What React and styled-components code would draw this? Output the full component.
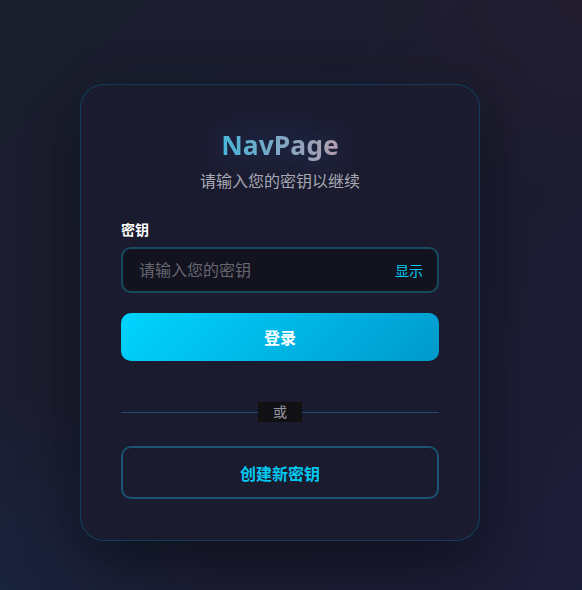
import React from "react";
import styled, { createGlobalStyle } from "styled-components";

const Global = createGlobalStyle`
  html, body { margin: 0; padding: 0; }
  body {
    font-family: "Noto Sans", "Noto Sans CJK SC", sans-serif;
    background: #1b1d30;
  }
`;

const Page = styled.div`
  width: 582px;
  height: 590px;
  box-sizing: border-box;
  padding: 84px 0 0 80px;
  overflow: hidden;
  background:
    radial-gradient(ellipse 60% 50% at 0% 100%, rgba(25, 38, 66, 0.75), transparent 70%),
    radial-gradient(ellipse 60% 50% at 100% 0%, rgba(36, 29, 48, 0.8), transparent 70%),
    linear-gradient(135deg, #1a1e2d 0%, #1c1c2f 50%, #1c1d38 100%);
`;

const Card = styled.div`
  width: 400px;
  box-sizing: border-box;
  padding: 43px 40px 41px;
  border-radius: 24px;
  background: #1b1b2f;
  border: 1px solid rgba(0, 150, 200, 0.28);
  box-shadow: 0 20px 60px rgba(0, 0, 0, 0.45), 0 0 40px rgba(0, 180, 255, 0.04);
  display: flex;
  flex-direction: column;
`;

const Header = styled.div`
  display: flex;
  flex-direction: column;
  align-items: center;
  margin-bottom: 27px;
`;

const Title = styled.h1`
  margin: 0;
  font-size: 26.5px;
  line-height: 34px;
  font-weight: 700;
  background: linear-gradient(90deg, #46b6da 0%, #7fa8c4 50%, #b39cad 100%);
  -webkit-background-clip: text;
  background-clip: text;
  color: transparent;
  filter: drop-shadow(0 0 16px rgba(40, 110, 200, 0.45));
`;

const Subtitle = styled.p`
  margin: 7px 0 0;
  font-size: 16px;
  line-height: 24px;
  color: #a9a9b3;
`;

const Label = styled.label`
  font-size: 14px;
  line-height: 20px;
  font-weight: 700;
  color: #ffffff;
  margin-bottom: 7px;
`;

const InputWrap = styled.div`
  height: 46px;
  box-sizing: border-box;
  border: 2px solid #164a5e;
  border-radius: 10px;
  background: #13131f;
  display: flex;
  align-items: center;
  padding: 0 14px 0 16px;
`;

const Input = styled.input`
  flex: 1;
  min-width: 0;
  border: none;
  outline: none;
  background: transparent;
  font-family: inherit;
  font-size: 16px;
  color: #ddd;
  padding: 0;
  &::placeholder { color: #676772; }
`;

const ShowBtn = styled.button`
  border: none;
  background: transparent;
  padding: 0;
  font-family: inherit;
  font-size: 14px;
  color: #00c8f0;
  cursor: pointer;
`;

const PrimaryButton = styled.button`
  margin-top: 20px;
  height: 48px;
  border: none;
  border-radius: 10px;
  background: linear-gradient(135deg, #00d4ff 0%, #0099cc 100%);
  color: #fff;
  font-family: inherit;
  font-size: 16px;
  font-weight: 700;
  cursor: pointer;
`;

const Divider = styled.div`
  margin: 41px 0 24px;
  display: flex;
  align-items: center;
  &::before, &::after {
    content: "";
    flex: 1;
    height: 1px;
    background: #1d5068;
  }
`;

const DividerText = styled.span`
  height: 20px;
  line-height: 20px;
  padding: 0 15px;
  background: #111114;
  color: #9a9aa2;
  font-size: 14px;
`;

const OutlineButton = styled.button`
  height: 53px;
  border: 2px solid #1a5470;
  border-radius: 10px;
  background: transparent;
  color: #00c8f0;
  font-family: inherit;
  font-size: 16px;
  font-weight: 700;
  cursor: pointer;
`;

export default function App() {
  return (
    <>
      <Global />
      <Page>
        <Card>
          <Header>
            <Title>NavPage</Title>
            <Subtitle>请输入您的密钥以继续</Subtitle>
          </Header>
          <Label>密钥</Label>
          <InputWrap>
            <Input type="password" placeholder="请输入您的密钥" />
            <ShowBtn>显示</ShowBtn>
          </InputWrap>
          <PrimaryButton>登录</PrimaryButton>
          <Divider>
            <DividerText>或</DividerText>
          </Divider>
          <OutlineButton>创建新密钥</OutlineButton>
        </Card>
      </Page>
    </>
  );
}
